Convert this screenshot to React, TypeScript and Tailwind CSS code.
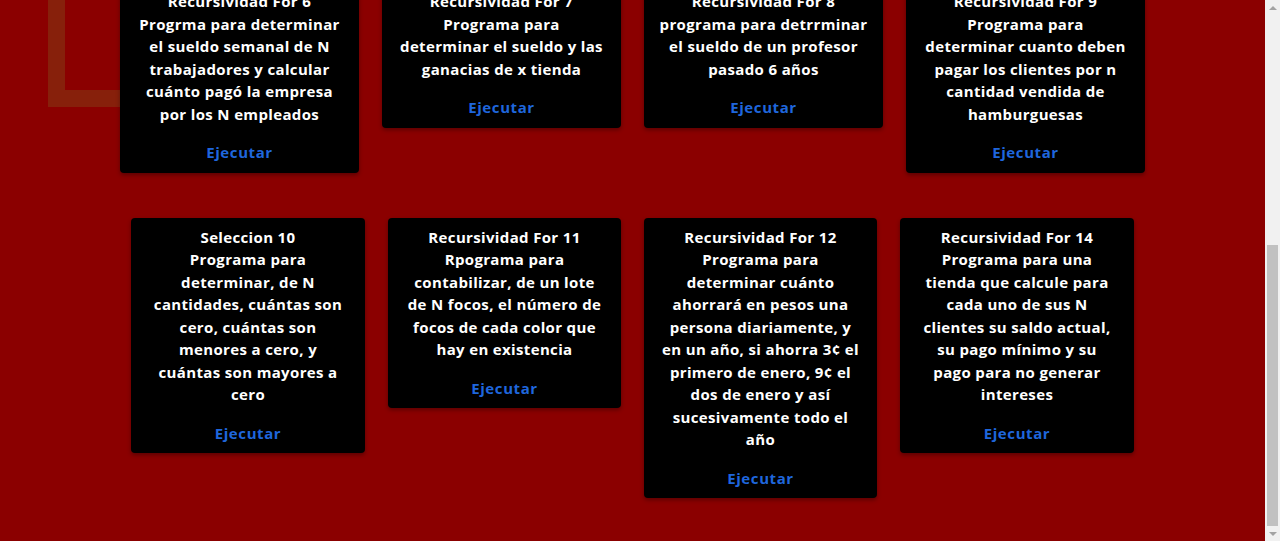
import React from "react";

type Card = { lines: string[]; w: string };

const row1: Card[] = [
  {
    w: "w-[239px]",
    lines: [
      "Recursividad For 6",
      "Progrma para determinar",
      "el sueldo semanal de N",
      "trabajadores y calcular",
      "cuánto pagó la empresa",
      "por los N empleados",
    ],
  },
  {
    w: "w-[239px]",
    lines: [
      "Recursividad For 7",
      "Programa para",
      "determinar el sueldo y las",
      "ganacias de x tienda",
    ],
  },
  {
    w: "w-[239px]",
    lines: [
      "Recursividad For 8",
      "programa para detrrminar",
      "el sueldo de un profesor",
      "pasado 6 años",
    ],
  },
  {
    w: "w-[239px]",
    lines: [
      "Recursividad For 9",
      "Programa para",
      "determinar cuanto deben",
      "pagar los clientes por n",
      "cantidad vendida de",
      "hamburguesas",
    ],
  },
];

const row2: Card[] = [
  {
    w: "w-[234px]",
    lines: [
      "Seleccion 10",
      "Programa para",
      "determinar, de N",
      "cantidades, cuántas son",
      "cero, cuántas son",
      "menores a cero, y",
      "cuántas son mayores a",
      "cero",
    ],
  },
  {
    w: "w-[233px]",
    lines: [
      "Recursividad For 11",
      "Rpograma para",
      "contabilizar, de un lote",
      "de N focos, el número de",
      "focos de cada color que",
      "hay en existencia",
    ],
  },
  {
    w: "w-[233px]",
    lines: [
      "Recursividad For 12",
      "Programa para",
      "determinar cuánto",
      "ahorrará en pesos una",
      "persona diariamente, y",
      "en un año, si ahorra 3¢ el",
      "primero de enero, 9¢ el",
      "dos de enero y así",
      "sucesivamente todo el",
      "año",
    ],
  },
  {
    w: "w-[234px]",
    lines: [
      "Recursividad For 14",
      "Programa para una",
      "tienda que calcule para",
      "cada uno de sus N",
      "clientes su saldo actual,",
      "su pago mínimo y su",
      "pago para no generar",
      "intereses",
    ],
  },
];

function CardView({ card }: { card: Card }) {
  return (
    <div
      className={`${card.w} shrink-0 rounded-[4px] bg-black pt-2 pb-[9px] text-center shadow-[0_2px_4px_rgba(0,0,0,0.35)]`}
    >
      <p className="whitespace-nowrap text-[15px] font-bold leading-[22.5px] tracking-[0.35px] text-white">
        {card.lines.map((l, i) => (
          <React.Fragment key={i}>
            {l}
            {i < card.lines.length - 1 && <br />}
          </React.Fragment>
        ))}
      </p>
      <p className="mt-4 text-[15px] font-bold leading-[22.5px] tracking-[0.6px] text-[#1f66dc]">Ejecutar</p>
    </div>
  );
}

export default function App() {
  return (
    <div
      className="flex h-[541px] w-[1280px] overflow-hidden bg-[#8b0000]"
      style={{ fontFamily: '"Open Sans", "Noto Sans", sans-serif' }}
    >
      <main className="relative flex-1 overflow-hidden">
        <div className="absolute left-[48px] top-[-60px] h-[167px] w-[200px] border-b-[17px] border-l-[17px] border-[#86230c]/90" />
        <div className="relative mt-[-18px] flex flex-col items-center gap-[45px]">
          <div className="flex items-start justify-center gap-[23px]">
            {row1.map((c, i) => (
              <CardView key={i} card={c} />
            ))}
          </div>
          <div className="flex items-start justify-center gap-[23px]">
            {row2.map((c, i) => (
              <CardView key={i} card={c} />
            ))}
          </div>
        </div>
      </main>
      <div className="flex w-[15px] flex-col bg-[#f1f1f1]">
        <div className="flex h-[15px] items-center justify-center">
          <div className="h-0 w-0 border-x-[4px] border-b-[4px] border-x-transparent border-b-[#a3a3a3]" />
        </div>
        <div className="flex-1 pt-[230px] px-[2px]">
          <div className="h-[281px] bg-[#c1c1c1]" />
        </div>
        <div className="flex h-[15px] items-center justify-center">
          <div className="h-0 w-0 border-x-[4px] border-t-[4px] border-x-transparent border-t-[#a3a3a3]" />
        </div>
      </div>
    </div>
  );
}
